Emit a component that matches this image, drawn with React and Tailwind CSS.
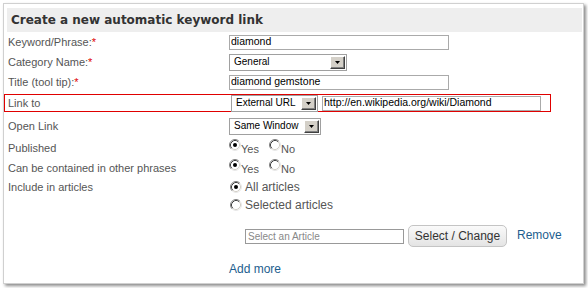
import { useState } from 'react';

const Radio = ({ checked }) => (
	<svg width="12" height="12" viewBox="0 0 12 12" className="shrink-0">
		<circle cx="6" cy="6" r="4.5" fill="#fff" />
		<path d="M2.11 9.89 A5.5 5.5 0 0 1 9.89 2.11" fill="none" stroke="#808080" strokeWidth="1" />
		<path d="M9.89 2.11 A5.5 5.5 0 0 1 2.11 9.89" fill="none" stroke="#e8e8e8" strokeWidth="1" />
		<path d="M2.82 9.18 A4.5 4.5 0 0 1 9.18 2.82" fill="none" stroke="#404040" strokeWidth="1" />
		<path d="M9.18 2.82 A4.5 4.5 0 0 1 2.82 9.18" fill="none" stroke="#d4d0c8" strokeWidth="1" />
		{checked && <circle cx="6" cy="6" r="2" fill="#000" />}
	</svg>
);

const Select = ({ value, width }) => (
	<div
		className={`flex items-center h-[17px] border border-[#a0a0a0] bg-white ${width}`}
	>
		<span className="pl-[4px] text-[10px] text-black leading-none">{value}</span>
		<span className="ml-auto mr-[1px] w-[15px] h-[13px] flex items-center justify-center bg-[#d4d0c8] border-t border-l border-t-white border-l-white border-b border-r border-b-[#404040] border-r-[#404040] shadow-[inset_-1px_-1px_0_#808080]">
			<svg width="5" height="3" viewBox="0 0 5 3">
				<path d="M0 0 H5 L2.5 3 Z" fill="#000" />
			</svg>
		</span>
	</div>
);

const Label = ({ children, required }) => (
	<div className="w-[225px] shrink-0 pl-[4px] text-[11px] text-[#555]">
		{children}
		{required && <span className="text-[#e00000]">*</span>}
	</div>
);

const App = () => {
	const [published, setPublished] = useState('yes');

	return (
		<div className="w-[588px] h-[288px] bg-white p-[3px] font-['Liberation_Sans',Arial,sans-serif]">
			<div className="box-border w-[581px] h-[281px] border border-[#d0d0d0] bg-white shadow-[2px_2px_3px_rgba(0,0,0,0.45)] pt-[4px]">
				<div className="ml-[3px] mr-[1px] h-[24px] bg-[#eeeeee] flex items-center pl-[4px]">
					<h3 className="font-['DejaVu_Sans',Verdana,sans-serif] font-bold text-[12px] text-[#333]">
						Create a new automatic keyword link
					</h3>
				</div>

				<div className="flex items-center h-[20px]">
					<Label required>Keyword/Phrase:</Label>
					<input
						type="text"
						defaultValue="diamond"
						className="w-[220px] h-[15px] border border-[#aaaaaa] px-[1px] text-[10.5px] text-black outline-none"
					/>
				</div>
				<div className="flex items-center h-[20px]">
					<Label required>Category Name:</Label>
					<Select value="General" width="w-[118px]" />
				</div>
				<div className="flex items-center h-[20px]">
					<Label required>Title (tool tip):</Label>
					<input
						type="text"
						defaultValue="diamond gemstone"
						className="w-[220px] h-[15px] border border-[#aaaaaa] px-[1px] text-[10.5px] text-black outline-none"
					/>
				</div>

				<div className="mt-[2px] w-[547px] h-[18px] border border-[#e00000] flex items-center">
					<div className="w-[226px] shrink-0 pl-[3px] text-[11px] text-[#555]">Link to</div>
					<Select value="External URL" width="w-[87px]" />
					<input
						type="text"
						defaultValue="http://en.wikipedia.org/wiki/Diamond"
						className="ml-[4px] w-[219px] h-[15px] border border-[#aaaaaa] px-[1px] text-[10.5px] text-black outline-none"
					/>
				</div>

				<div className="flex items-center h-[24px] mt-[2px]">
					<Label>Open Link</Label>
					<Select value="Same Window" width="w-[92px]" />
				</div>

				<div className="flex items-center h-[20px]">
					<Label>Published</Label>
					<label className="flex items-start text-[11px] text-[#555]" onClick={() => setPublished('yes')}>
						<Radio checked={published === 'yes'} />
						<span className="mt-[2px]">Yes</span>
					</label>
					<label className="flex items-start ml-[10px] text-[11px] text-[#555]" onClick={() => setPublished('no')}>
						<Radio checked={published === 'no'} />
						<span className="mt-[2px]">No</span>
					</label>
				</div>
				<div className="flex items-center h-[20px]">
					<Label>Can be contained in other phrases</Label>
					<label className="flex items-start text-[11px] text-[#555]">
						<Radio checked />
						<span className="mt-[2px]">Yes</span>
					</label>
					<label className="flex items-start ml-[10px] text-[11px] text-[#555]">
						<Radio />
						<span className="mt-[2px]">No</span>
					</label>
				</div>

				<div className="flex items-center h-[18px]">
					<Label>Include in articles</Label>
					<label className="flex items-center gap-[3px] text-[12px] text-[#555] ml-[1px]">
						<Radio checked />
						<span>All articles</span>
					</label>
				</div>
				<div className="flex items-center h-[17px]">
					<div className="w-[225px] shrink-0" />
					<label className="flex items-center gap-[3px] text-[12px] text-[#555] ml-[1px]">
						<Radio />
						<span>Selected articles</span>
					</label>
				</div>

				<div className="flex items-center h-[22px] mt-[12px]">
					<div className="w-[241px] shrink-0" />
					<input
						type="text"
						placeholder="Select an Article"
						className="w-[159px] h-[15px] border border-[#999999] px-[2px] text-[10px] placeholder:text-[#888] outline-none"
					/>
					<button className="ml-[4px] w-[99px] h-[22px] rounded-[5px] border border-[#c4c4c4] bg-gradient-to-b from-[#fafafa] to-[#e4e4e4] text-[12px] text-[#333]">
						Select / Change
					</button>
					<a href="#" className="ml-[10px] mb-[3px] text-[12px] text-[#1d5e8e]">
						Remove
					</a>
				</div>

				<div className="flex items-center h-[18px] mt-[13px]">
					<div className="w-[225px] shrink-0" />
					<a href="#" className="text-[12px] text-[#1d5e8e]">
						Add more
					</a>
				</div>
			</div>
		</div>
	);
};

export default App;
